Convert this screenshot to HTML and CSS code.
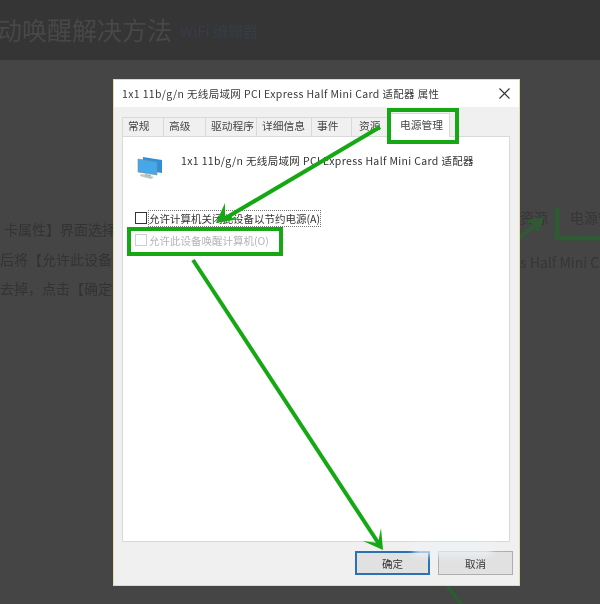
FILE: index.html
```html
<!DOCTYPE html>
<html lang="zh">
<head>
<meta charset="utf-8">
<title>属性</title>
<link rel="stylesheet" href="styles.css">
</head>
<body>
<div class="stage">
  <header class="head">
    <h1 class="head-title">动唤醒解决方法</h1>
    <span class="head-meta">WiFi 编辑器</span>
  </header>
  <main class="article">
    <div class="row row-a"><span class="row-left">卡属性】界面选择</span><span class="row-right"><span>资源</span><span>电源管理</span></span></div>
    <div class="row row-b"><span class="row-left">后将【允许此设备</span><span class="row-right">s Half Mini Card</span></div>
    <div class="row row-c"><span class="row-left">去掉，点击【确定</span></div>
  </main>
  <svg class="back-marks" width="600" height="604" viewBox="0 0 600 604" aria-hidden="true">
    <path d="M519 238 L541 220" fill="none" stroke="#2f5a33" stroke-width="4"/>
    <path d="M544 217 L524 221 L533 224 L538 234 Z" fill="#2f5a33"/>
    <path d="M557 208 V238 H600" fill="none" stroke="#2f5a33" stroke-width="5"/>
    <path d="M446 584 L461 604" fill="none" stroke="#2f5a33" stroke-width="4"/>
  </svg>

  <section class="dialog">
    <div class="titlebar">
      <span class="titlebar-text">1x1 11b/g/n 无线局域网 PCI Express Half Mini Card 适配器 属性</span>
      <svg class="close" width="11" height="11" viewBox="0 0 11 11" aria-hidden="true"><path d="M0.5 0.5 L10.5 10.5 M10.5 0.5 L0.5 10.5" stroke="#333" stroke-width="1.1"/></svg>
    </div>
    <div class="tabs">
      <span class="tab tab-1">常规</span>
      <span class="tab tab-2">高级</span>
      <span class="tab tab-3">驱动程序</span>
      <span class="tab tab-4">详细信息</span>
      <span class="tab tab-5">事件</span>
      <span class="tab tab-6">资源</span>
      <span class="tab tab-active">电源管理</span>
    </div>
    <div class="page">
      <div class="device">
        <svg class="device-icon" width="26" height="26" viewBox="0 0 26 26" aria-hidden="true">
          <path d="M6 2 L25 5 L25 18 L6 15 Z" fill="#2f8fd6"/>
          <path d="M1 4 L20 7 L20 20 L1 17 Z" fill="#45a8e8" stroke="#7a8a96" stroke-width="0.6"/>
          <path d="M8 19 L14 20 L14 23 L7 22 Z" fill="#9fb4a8"/>
          <path d="M4 19 L17 22 L14 24 L3 21 Z" fill="#b9c7bd"/>
        </svg>
        <span class="device-name">1x1 11b/g/n 无线局域网 PCI Express Half Mini Card 适配器</span>
      </div>
      <label class="option option-on"><span class="check"></span><span class="option-text focus">允许计算机关闭此设备以节约电源(A)</span></label>
      <label class="option option-off"><span class="check"></span><span class="option-text">允许此设备唤醒计算机(O)</span></label>
    </div>
    <div class="actions">
      <span class="btn btn-primary">确定</span>
      <span class="btn">取消</span>
    </div>
  </section>

  <div class="smudge"></div>

  <svg class="marks" width="600" height="604" viewBox="0 0 600 604" aria-hidden="true">
    <g fill="none" stroke="#16a814" stroke-width="4">
      <rect x="389" y="110" width="68" height="32"/>
      <rect x="129" y="229" width="152" height="25"/>
      <path d="M380 127 L224 219"/>
      <path d="M193 260 L379 544"/>
    </g>
    <path d="M216 223 L225 203 L225 217 L240 219 Z" fill="#16a814"/>
    <path d="M383 550 L381 528 L378 543 L363 541 Z" fill="#16a814"/>
  </svg>
</div>
</body>
</html>
```
FILE: styles.css
```css
html, body {
  margin: 0;
  padding: 0;
  background: #454545;
}
.stage {
  position: relative;
  width: 600px;
  height: 604px;
  overflow: hidden;
  background: #454545;
  font-family: "Noto Sans CJK SC", "Liberation Sans", sans-serif;
}
.head {
  height: 60px;
  background: #353535;
  display: flex;
  align-items: center;
  gap: 8px;
  filter: blur(0.7px);
}
.head-title {
  margin: 0 0 2px -3px;
  font-size: 25px;
  font-weight: 400;
  color: #484848;
  white-space: nowrap;
}
.head-meta {
  font-size: 15px;
  color: #363c48;
  white-space: nowrap;
}
.article {
  padding-top: 159px;
  font-size: 14px;
  color: #333;
  filter: blur(0.7px);
}
.row {
  display: flex;
  white-space: nowrap;
}
.row-a { height: 30px; }
.row-b { height: 29px; }
.row-c { height: 20px; }
.row-left { flex: 0 0 520px; overflow: hidden; }
.row-a .row-left { flex-basis: 516px; margin-left: 4px; }
.row-right {
  display: flex;
  gap: 22px;
  color: #363636;
}
.row-a .row-right { margin-top: -12px; }
.row-b .row-right { margin-top: 3px; }
.back-marks, .marks {
  position: absolute;
  left: 0;
  top: 0;
}
.dialog {
  position: absolute;
  left: 113px;
  top: 79px;
  width: 405px;
  height: 505px;
  border: 1px solid #e3dca6;
  background: #f0f0f0;
  display: flex;
  flex-direction: column;
  color: #333;
  font-size: 10.5px;
  filter: blur(0.35px);
}
.titlebar {
  height: 27px;
  flex: none;
  background: #fff;
  display: flex;
  align-items: center;
  justify-content: space-between;
  padding: 0 9px 0 8px;
  color: #3a3a3a;
  white-space: nowrap;
}
.titlebar-text, .device-name { letter-spacing: 0.35px; }
.tabs {
  flex: none;
  height: 19px;
  margin: 10px 0 0 8px;
  display: flex;
  align-items: flex-end;
  position: relative;
}
.tab {
  height: 19px;
  box-sizing: border-box;
  border: 1px solid #d9d9d9;
  border-bottom: 0;
  border-left: 0;
  display: flex;
  align-items: center;
  padding: 0 0 3px 5px;
  font-size: 10.75px;
  color: #444;
}
.tab-1 { width: 42px; border-left: 1px solid #d9d9d9; }
.tab-2 { width: 42px; }
.tab-3 { width: 51px; }
.tab-4 { width: 55px; }
.tab-5 { width: 40px; }
.tab-6 { width: 38px; padding-left: 7px; }
.tab-active {
  width: 60px;
  height: 24px;
  background: #fff;
  margin-bottom: -1px;
  position: relative;
  z-index: 1;
  align-items: flex-start;
  padding: 3px 0 0 9px;
  border-left: 1px solid #d9d9d9;
}
.page {
  flex: none;
  height: 406px;
  width: 388px;
  margin-left: 8px;
  box-sizing: border-box;
  background: #fff;
  border: 1px solid #d9d9d9;
  padding: 14px 12px 0;
}
.device {
  display: flex;
  gap: 18px;
  height: 60px;
  align-items: flex-start;
}
.device-icon { flex: none; margin: 4px 0 0 2px; }
.device-name { white-space: nowrap; margin-top: 2px; }
.option {
  display: flex;
  align-items: center;
  gap: 2px;
  white-space: nowrap;
}
.option-on { height: 14px; color: #333; }
.option-off { height: 14px; margin-top: 8px; color: #b5b5b5; }
.check {
  width: 10px;
  height: 10px;
  flex: none;
  border: 1px solid #333;
  background: #fff;
}
.option-off .check { border-color: #cfcfcf; }
.focus {
  outline: 1px dotted #777;
}
.actions {
  flex: 1;
  display: flex;
  justify-content: flex-end;
  gap: 8px;
  padding: 9px 6px 0 0;
}
.btn {
  width: 75px;
  height: 24px;
  box-sizing: border-box;
  background: #e1e1e1;
  border: 1px solid #adadad;
  display: flex;
  align-items: center;
  justify-content: center;
  color: #333;
}
.btn-primary { border: 2px solid #2a72b5; }
.smudge {
  position: absolute;
  left: 414px;
  top: 544px;
  width: 78px;
  height: 12px;
  background: #eef3f7;
  opacity: 0.75;
  filter: blur(3px);
}
```
